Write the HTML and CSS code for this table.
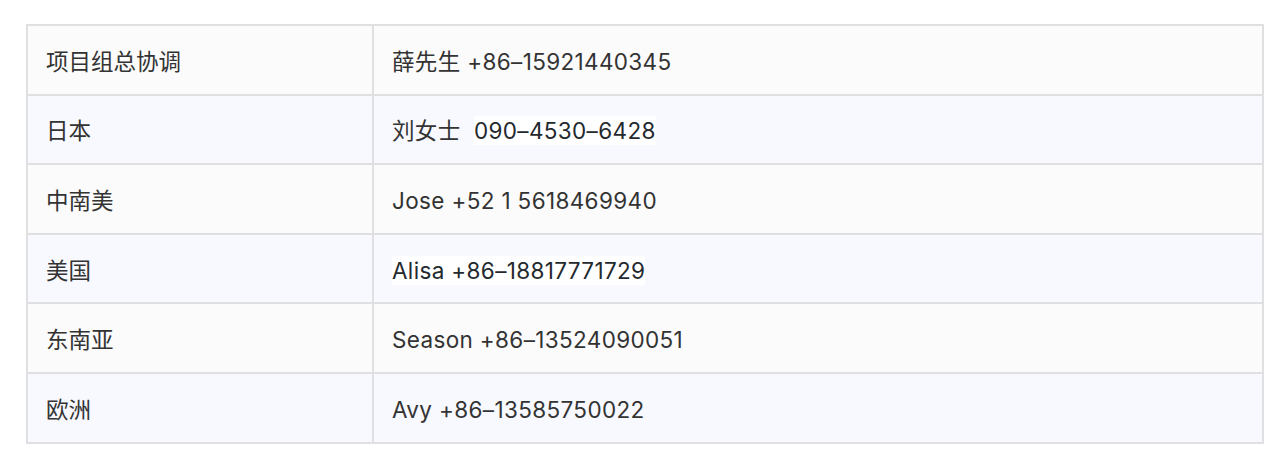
FILE: index.html
```html
<!DOCTYPE html>
<html lang="zh">
<head>
<meta charset="utf-8">
<link rel="stylesheet" href="styles.css">
</head>
<body>
<table class="contacts">
  <tbody>
    <tr class="row-odd"><td class="region">项目组总协调</td><td class="contact">薛先生 +86–15921440345</td></tr>
    <tr class="row-even"><td class="region">日本</td><td class="contact">刘女士&nbsp; <span class="hl">090–4530–6428</span></td></tr>
    <tr class="row-odd"><td class="region">中南美</td><td class="contact">Jose +52 1 5618469940</td></tr>
    <tr class="row-even"><td class="region">美国</td><td class="contact"><span class="hl">Alisa +86–18817771729</span></td></tr>
    <tr class="row-odd"><td class="region">东南亚</td><td class="contact">Season +86–13524090051</td></tr>
    <tr class="row-even"><td class="region">欧洲</td><td class="contact">Avy +86–13585750022</td></tr>
  </tbody>
</table>
</body>
</html>
```
FILE: styles.css
```css
html, body {
  margin: 0;
  padding: 0;
  background: #ffffff;
}
body {
  padding: 24px 16px 0 26px;
  font-family: "Inter", "Noto Sans CJK SC", sans-serif;
  font-size: 22.5px;
  color: #333333;
}
.contacts {
  border-collapse: collapse;
  width: 1238px;
  table-layout: fixed;
}
.contacts td {
  border: 2px solid #e0e0e2;
  height: 63.6px;
  padding: 4px 18px 0;
  vertical-align: middle;
  white-space: nowrap;
  line-height: 30px;
}
.region {
  width: 308px;
}
.contact {
  letter-spacing: 0.35px;
}
.row-odd td {
  background: #fbfbfb;
}
.row-even td {
  background: #f8f9fe;
}
.hl {
  background: #ffffff;
  color: #24292e;
  padding: 1px 0;
}
```
